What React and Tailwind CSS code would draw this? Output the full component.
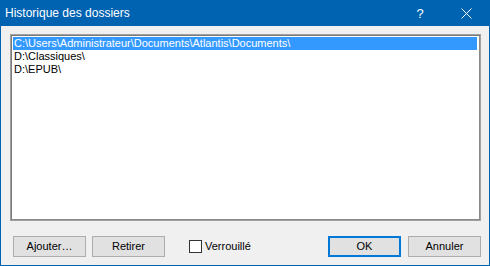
export default function App() {
  const font = { fontFamily: '"Liberation Sans", Arial, sans-serif' };
  const rows = [
    "C:\\Users\\Administrateur\\Documents\\Atlantis\\Documents\\",
    "D:\\Classiques\\",
    "D:\\EPUB\\",
  ];
  return (
    <div
      className="w-[490px] h-[266px] flex flex-col bg-[#f0f0f0] border-l border-r border-b border-[#0063b1] text-[11px] text-black overflow-hidden"
      style={font}
    >
      <div className="h-[26px] shrink-0 bg-[#0063b1] flex items-center text-white">
        <div className="pl-[4px] text-[12px] flex-1 leading-none">Historique des dossiers</div>
        <div className="w-[46px] text-center text-[13px] leading-none mr-[0px]">?</div>
        <div className="w-[46px] flex items-center justify-center">
          <svg width="11" height="11" viewBox="0 0 11 11">
            <path d="M0.5 0.5 L10.5 10.5 M10.5 0.5 L0.5 10.5" stroke="white" strokeWidth="1" fill="none" />
          </svg>
        </div>
      </div>
      <div className="flex-1 flex flex-col pl-[9px] pt-[8px]">
        <div className="w-[471px] h-[187px] bg-white border border-[#a0a0a0] shadow-[inset_1px_1px_0_#7a7a7a,inset_-1px_-1px_0_#8a8a8a] pt-[2px] pl-[2px] pr-[3px]">
          {rows.map((r, i) => (
            <div
              key={i}
              className={
                "h-[13px] leading-[13px] pl-[1px] whitespace-nowrap " +
                (i === 0 ? "bg-[#3399ff] text-white" : "")
              }
            >
              {r}
            </div>
          ))}
        </div>
        <div className="mt-[15px] flex items-center w-[471px]">
          <div className="ml-[3px] w-[73px] h-[21px] bg-[#e1e1e1] border border-[#adadad] flex items-center justify-center">
            Ajouter…
          </div>
          <div className="ml-[6px] w-[73px] h-[21px] bg-[#e1e1e1] border border-[#adadad] flex items-center justify-center">
            Retirer
          </div>
          <div className="ml-[24px] flex items-center">
            <div className="w-[13px] h-[13px] bg-white border border-[#333333]"></div>
            <span className="ml-[3px]">Verrouillé</span>
          </div>
          <div className="flex-1"></div>
          <div className="w-[73px] h-[21px] bg-[#e1e1e1] border-2 border-[#0078d7] flex items-center justify-center">
            OK
          </div>
          <div className="ml-[7px] w-[73px] h-[21px] bg-[#e1e1e1] border border-[#adadad] flex items-center justify-center">
            Annuler
          </div>
        </div>
      </div>
    </div>
  );
}
